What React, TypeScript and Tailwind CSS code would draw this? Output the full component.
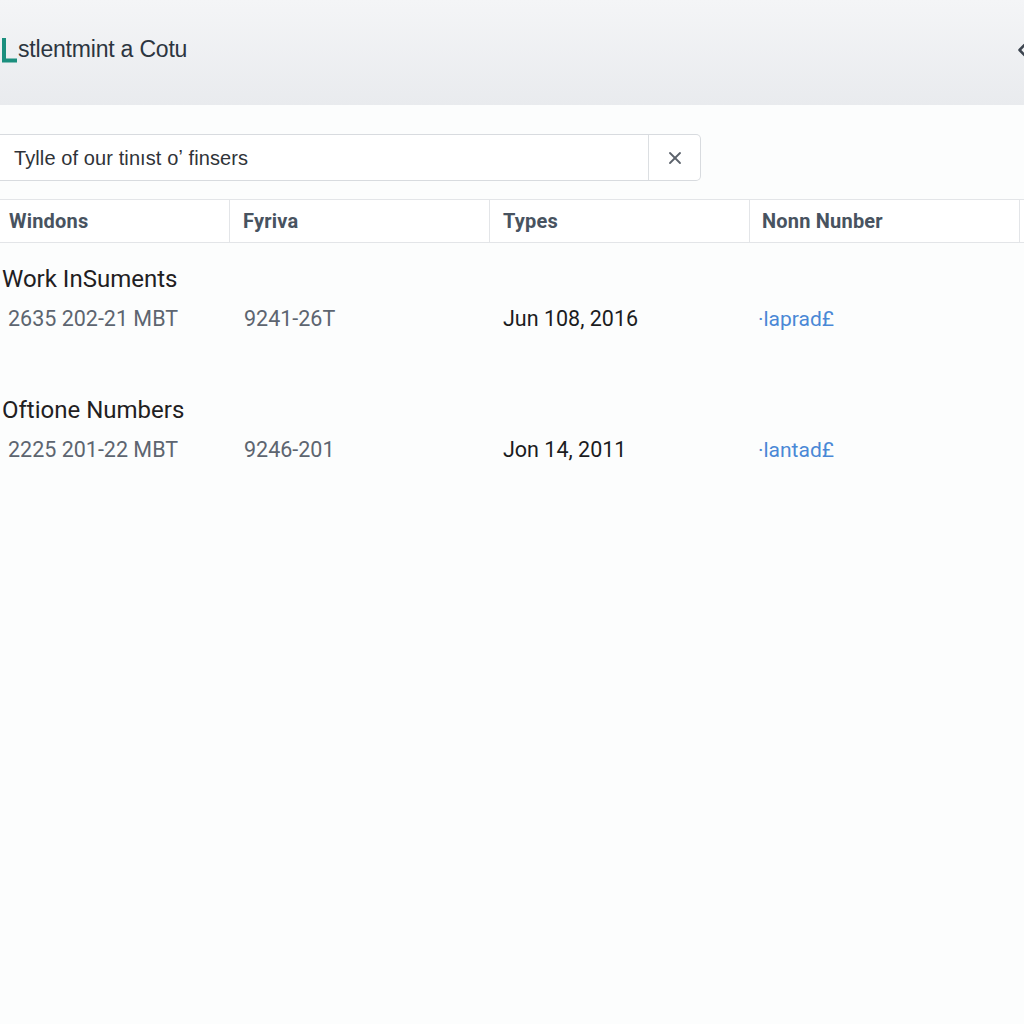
import { ChevronLeft, X } from 'lucide-react';

const columns = ['Windons', 'Fyriva', 'Types', 'Nonn Nunber'];

const groups = [
  {
    title: 'Work InSuments',
    row: ['2635 202-21 MBT', '9241-26T', 'Jun 108, 2016', '·laprad£'],
  },
  {
    title: 'Oftione Numbers',
    row: ['2225 201-22 MBT', '9246-201', 'Jon 14, 2011', '·lantad£'],
  },
];

function Logo() {
  return (
    <svg width="18" height="26" viewBox="0 0 18 26" className="shrink-0">
      <path d="M4 1 L4 23.5 L17 23.5" fill="none" stroke="#1b8f7e" strokeWidth="4" />
    </svg>
  );
}

export default function App() {
  return (
    <div className="min-h-screen w-[1024px] overflow-hidden bg-[#fcfdfd] font-['Roboto',sans-serif]">
      <header className="flex h-[105px] items-center justify-between bg-gradient-to-b from-[#f4f5f7] to-[#e9ebee] pb-[6px]">
        <div className="flex items-center">
          <Logo />
          <h1 className="font-['Liberation_Sans',sans-serif] text-[23px] tracking-[-0.2px] text-[#2c3540]">
            stlentmint a Cotu
          </h1>
        </div>
        <ChevronLeft className="-mr-[8px] h-[20px] w-[20px] text-[#3d4550]" strokeWidth={3} />
      </header>

      <div className="pt-[29px]">
        <div className="flex h-[47px] w-[701px] items-stretch rounded-r-[5px] border border-l-0 border-[#d8dbdf] bg-white">
          <div className="flex flex-1 items-center pl-[14px] font-['Liberation_Sans',sans-serif] text-[20px] tracking-[0.1px] text-[#2f3338]">
            Tylle of our tinıst oʼ finsers
          </div>
          <div className="flex w-[52px] items-center justify-center border-l border-[#dcdfe2]">
            <X className="h-[20px] w-[20px] text-[#5b626b]" strokeWidth={2.2} />
          </div>
        </div>
      </div>

      <div className="pt-[18px]">
        <div className="grid h-[44px] grid-cols-[230px_260px_260px_270px] border-y border-[#e3e5e8] bg-white">
          {columns.map((c, i) => (
            <div
              key={c}
              className={`flex items-center border-r border-[#e3e5e8] text-[20px] font-bold tracking-[0.2px] text-[#485360] ${
                i === 0 ? 'pl-[9px]' : i === 3 ? 'pl-[12px]' : 'pl-[13px]'
              }`}
            >
              {c}
            </div>
          ))}
        </div>

        {groups.map((g) => (
          <div key={g.title} className="pb-[42px] pt-[21px]">
            <div className="pl-[2px] text-[24px] leading-[30px] text-[#1f2022]">{g.title}</div>
            <div className="mt-[12px] grid grid-cols-[230px_260px_260px_270px] text-[21.5px] leading-[26px]">
              <div className="pl-[8px] text-[#5d6570]">{g.row[0]}</div>
              <div className="pl-[14px] text-[#5d6570]">{g.row[1]}</div>
              <div className="pl-[13px] text-[#1b1c1e]">{g.row[2]}</div>
              <div className="pl-[8px] text-[21px] text-[#4a88d6]">{g.row[3]}</div>
            </div>
          </div>
        ))}
      </div>
    </div>
  );
}
